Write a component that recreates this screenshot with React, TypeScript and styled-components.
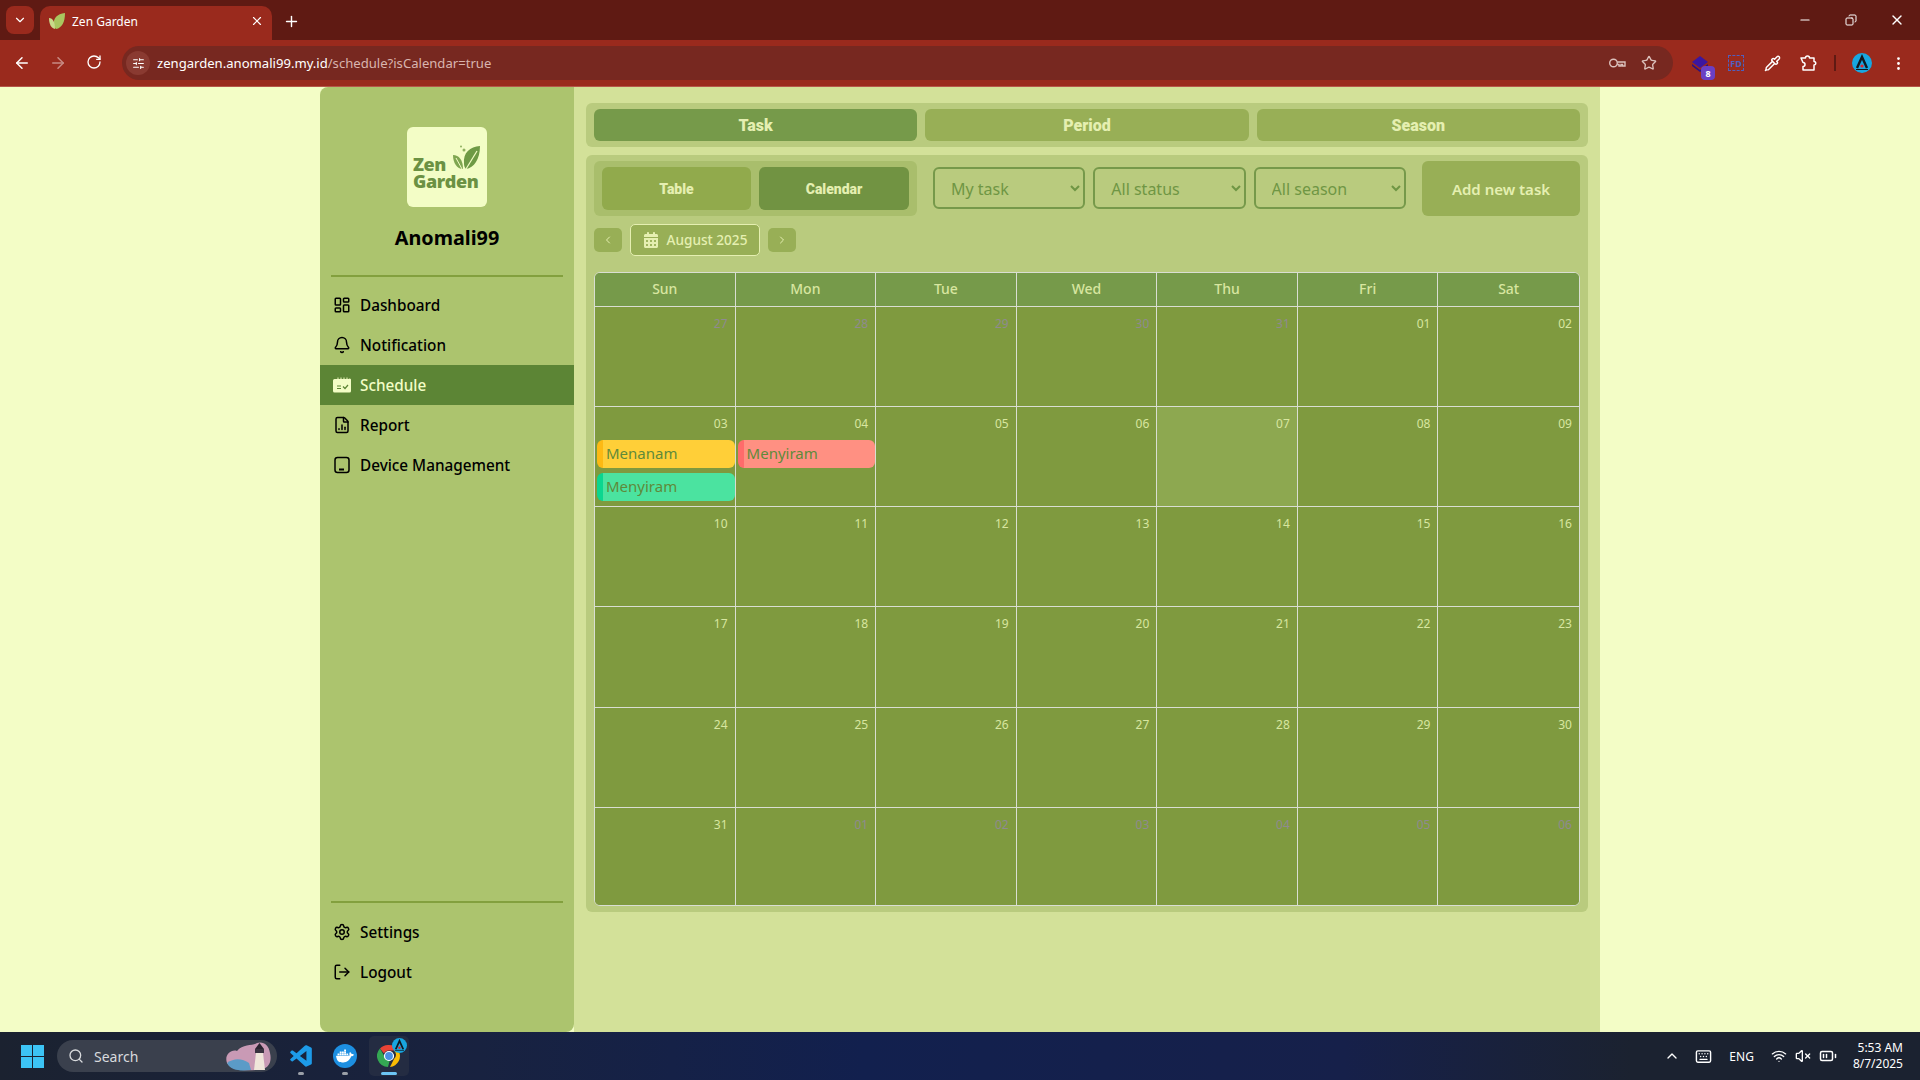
import styled, { createGlobalStyle } from "styled-components"
import { ArrowLeft, ArrowRight, ChevronDown, ChevronLeft, ChevronRight, ChevronUp, Copy, EllipsisVertical, Keyboard, LayoutDashboard, Bell, Minus, Pipette, Plus, RotateCw, Search, Settings, SlidersHorizontal, Star, VolumeX, Wifi, X, BatteryMedium, LogOut, FileChartColumn } from "lucide-react"
import { FaCalendarDays } from "react-icons/fa6"
import { SiDocker } from "react-icons/si"
import { BiLogoVisualStudio } from "react-icons/bi"

const GlobalStyle = createGlobalStyle`
    * { box-sizing: border-box; }
    html, body { margin: 0; padding: 0; height: 100%; overflow: hidden; }
    body { font-family: "Noto Sans", "Open Sans", sans-serif; background: #F3FDC6; }
`

const Screen = styled.div`
    width: 1920px;
    height: 1080px;
    display: flex;
    flex-direction: column;
`

/* browser chrome */
const TabStrip = styled.div`
    height: 40px;
    flex: none;
    background: #5F1A13;
    display: flex;
    align-items: flex-end;
    padding-left: 6px;
    color: #fff;
`
const TabMenu = styled.div`
    width: 28px;
    height: 28px;
    margin-bottom: 6px;
    border-radius: 8px;
    background: #9A2A1D;
    display: flex;
    align-items: center;
    justify-content: center;
`
const Tab = styled.div`
    width: 232px;
    height: 34px;
    margin-left: 6px;
    padding: 0 8px 4px 8px;
    border-radius: 10px 10px 0 0;
    background: #9A2A1D;
    display: flex;
    align-items: center;
    gap: 6px;
    font-size: 12px;
`
const TabTitle = styled.span`
    flex: 1;
`
const NewTab = styled.div`
    width: 38px;
    height: 34px;
    padding-bottom: 4px;
    display: flex;
    align-items: center;
    justify-content: center;
`
const WindowButtons = styled.div`
    margin-left: auto;
    height: 40px;
    display: flex;
    align-items: center;
`
const WindowButton = styled.div`
    width: 46px;
    display: flex;
    justify-content: center;
`
const Toolbar = styled.div`
    height: 47px;
    flex: none;
    background: #9A2A1D;
    border-bottom: 1px solid #B5564A;
    display: flex;
    align-items: center;
    color: #fff;
`
const NavIcon = styled.div<{ $off?: boolean }>`
    width: 36px;
    display: flex;
    justify-content: center;
    opacity: ${props => props.$off ? 0.45 : 1};
`
const NavIcons = styled.div`
    width: 112px;
    padding-left: 4px;
    display: flex;
    flex: none;
`
const Omnibox = styled.div`
    width: 1551px;
    height: 34px;
    margin-left: 10px;
    margin-right: 9px;
    border-radius: 17px;
    background: #772820;
    display: flex;
    align-items: center;
    padding: 0 16px 0 4px;
    font-size: 13.1px;
`
const SiteInfo = styled.div`
    width: 24px;
    height: 24px;
    border-radius: 50%;
    background: #8A3A31;
    display: flex;
    align-items: center;
    justify-content: center;
    margin-right: 7px;
`
const Url = styled.span`
    flex: 1;
    color: #fff;
    span { color: #D9B5AF; }
`
const OmniIcons = styled.div`
    display: flex;
    align-items: center;
    gap: 15px;
    color: #DCC1BC;
`
const Extensions = styled.div`
    display: flex;
    align-items: center;
    gap: 16px;
    padding-left: 8px;
`
const ExtSlot = styled.div`
    position: relative;
    width: 20px;
    height: 20px;
    display: flex;
    align-items: center;
    justify-content: center;
`
const ExtBadge = styled.span`
    position: absolute;
    right: -5px;
    bottom: -7px;
    width: 14px;
    height: 14px;
    border-radius: 4px;
    background: #6A3FC4;
    color: #fff;
    font-size: 9px;
    font-weight: 700;
    display: flex;
    align-items: center;
    justify-content: center;
`
const FdBox = styled.div`
    width: 16px;
    height: 16px;
    border: 1px dashed #4F5FC0;
    color: #4F5FC0;
    font-size: 9px;
    font-weight: 700;
    display: flex;
    align-items: center;
    justify-content: center;
`
const Separator = styled.div`
    width: 2px;
    height: 16px;
    background: #5F1A13;
`

/* page */
const Page = styled.div`
    flex: 1;
    min-height: 0;
    display: flex;
    justify-content: center;
    background: #F3FDC6;
`
const Sidebar = styled.aside`
    width: 254px;
    background: #ACC46E;
    border-radius: 8px 0 8px 8px;
    display: flex;
    flex-direction: column;
    padding-bottom: 40px;
`
const Logo = styled.div`
    width: 80px;
    height: 80px;
    margin: 40px auto 0;
    border-radius: 6px;
    background: #F3FDC6;
    color: #6B9143;
    font-family: "Open Sans", sans-serif;
    font-weight: 800;
    font-size: 18px;
    line-height: 17px;
    padding: 29px 0 0 6px;
`
const LogoLine = styled.div`
    display: flex;
    height: 16.5px;
    letter-spacing: -0.4px;
`
const UserName = styled.h1`
    margin: 15px 0 0;
    text-align: center;
    font-size: 19.8px;
    line-height: 32px;
    font-weight: 700;
    color: #000;
`
const Divider = styled.hr<{ $bottom?: boolean }>`
    width: 232px;
    height: 2px;
    border: none;
    background: #83A03E;
    margin: ${props => props.$bottom ? "auto auto 9px" : "21px auto 8px"};
`
const NavItem = styled.div<{ $active?: boolean }>`
    height: 40px;
    flex: none;
    display: flex;
    align-items: center;
    gap: 9px;
    padding-left: 13px;
    font-size: 15.3px;
    font-weight: 500;
    color: ${props => props.$active ? "#F3FDC6" : "#000"};
    background: ${props => props.$active ? "#5C8535" : "transparent"};
`
const Main = styled.main`
    width: 1026px;
    background: #D3E199;
    padding: 16px 12px 0;
    display: flex;
    flex-direction: column;
    gap: 8px;
`
const TabPanel = styled.div`
    height: 44px;
    flex: none;
    padding: 6px 8px;
    background: #B9CB7E;
    border-radius: 6px;
    display: grid;
    grid-template-columns: repeat(3, 1fr);
    gap: 8px;
`
const TopTab = styled.div<{ $active?: boolean }>`
    border-radius: 6px;
    background: ${props => props.$active ? "#769A4A" : "#98AF56"};
    color: #E5EFB1;
    font-family: Roboto, sans-serif;
    font-weight: 900;
    font-size: 16px;
    display: flex;
    align-items: center;
    justify-content: center;
`
const ContentPanel = styled.section`
    height: 757px;
    flex: none;
    padding: 6px 8px;
    background: #B9CB7E;
    border-radius: 6px;
    display: flex;
    flex-direction: column;
`
const FilterRow = styled.div`
    height: 55px;
    flex: none;
    display: flex;
    gap: 8px;
`
const ViewSwitch = styled.div`
    width: 323px;
    height: 55px;
    padding: 6px 8px;
    margin-right: 8px;
    border-radius: 6px;
    background: #A9BE6C;
    display: grid;
    grid-template-columns: 149px 150px;
    gap: 8px;
`
const ViewButton = styled.div<{ $active?: boolean }>`
    border-radius: 6px;
    background: ${props => props.$active ? "#719342" : "#91AA4C"};
    color: #E5EFB1;
    font-family: Roboto, sans-serif;
    font-weight: 900;
    font-size: 14px;
    display: flex;
    align-items: center;
    justify-content: center;
`
const Filter = styled.select`
    width: 152.3px;
    height: 42px;
    margin-top: 6px;
    border: 2px solid #76994A;
    border-radius: 6px;
    background: transparent;
    color: #6F9644;
    font-family: inherit;
    font-size: 16px;
    padding: 2px 12px 0;
`
const AddButton = styled.div`
    width: 158px;
    height: 55px;
    margin-left: auto;
    border-radius: 6px;
    background: #98AF56;
    color: #E5EFB1;
    font-size: 15px;
    font-weight: 600;
    display: flex;
    align-items: center;
    justify-content: center;
`
const MonthRow = styled.div`
    display: flex;
    align-items: center;
    gap: 8px;
    height: 32px;
    margin-top: 8px;
`
const MonthStep = styled.div`
    width: 28px;
    height: 24px;
    border-radius: 5px;
    background: #98AF56;
    color: #E5EFB1;
    display: flex;
    align-items: center;
    justify-content: center;
`
const MonthLabel = styled.div`
    width: 130px;
    height: 32px;
    padding-bottom: 1px;
    border: 1px solid #E5EFB1;
    border-radius: 5px;
    background: #98AF56;
    color: #E5EFB1;
    font-size: 13.6px;
    font-weight: 500;
    display: flex;
    align-items: center;
    justify-content: center;
    gap: 8px;
`
const Calendar = styled.div`
    width: 986px;
    height: 636px;
    margin-top: 16px;
    border: 1px solid #D9DED2;
    border-radius: 6px;
    overflow: hidden;
    display: grid;
    grid-template-columns: repeat(7, 1fr);
    grid-template-rows: 34px repeat(6, 100.15px);
    background: #7F9A3F;
`
const DayName = styled.div<{ $last?: boolean }>`
    padding-bottom: 2px;
    background: #769A4A;
    color: #D8E6A0;
    font-size: 14px;
    font-weight: 500;
    display: flex;
    align-items: center;
    justify-content: center;
    border-right: ${props => props.$last ? "none" : "1px solid #D9DED2"};
    border-bottom: 1px solid #D9DED2;
`
const DayCell = styled.div<{ $today?: boolean; $last?: boolean; $bottom?: boolean }>`
    min-height: 0;
    overflow: hidden;
    padding: 9px 0 0 2px;
    background: ${props => props.$today ? "#8DA850" : "#7F9A3F"};
    border-right: ${props => props.$last ? "none" : "1px solid #D9DED2"};
    border-bottom: ${props => props.$bottom ? "none" : "1px solid #D9DED2"};
`
const DayNumber = styled.div<{ $dim?: boolean }>`
    height: 16px;
    padding-right: 7px;
    text-align: right;
    font-size: 12px;
    line-height: 16px;
    color: ${props => props.$dim ? "#8F8A90" : "#D8E6A0"};
`
const EventList = styled.div`
    margin-top: 8px;
    display: flex;
    flex-direction: column;
    gap: 5px;
`
const EventChip = styled.div<{ $fill: string; $edge: string }>`
    height: 28px;
    flex: none;
    padding-left: 3px;
    border-left: 6px solid ${props => props.$edge};
    border-radius: 6px;
    background: ${props => props.$fill};
    color: #5F8A3A;
    font-size: 15px;
    line-height: 26px;
`

/* taskbar */
const Taskbar = styled.footer`
    height: 48px;
    flex: none;
    background: linear-gradient(90deg, #1B2230 0%, #182240 25%, #12204E 45%, #16204A 70%, #1B2230 85%);
    display: flex;
    align-items: center;
    color: #fff;
    padding-left: 21px;
`
const SearchBox = styled.div`
    width: 220px;
    height: 32px;
    margin-left: 13px;
    padding: 0 4px 0 11px;
    border-radius: 16px;
    background: #3A404D;
    color: #D8DADD;
    font-size: 14px;
    display: flex;
    align-items: center;
    gap: 10px;
`
const SearchLabel = styled.span`
    flex: 1;
`
const TaskItem = styled.div<{ $active?: boolean }>`
    position: relative;
    width: 40px;
    height: 40px;
    margin-left: 4px;
    border-radius: 5px;
    background: ${props => props.$active ? "#242C42" : "transparent"};
    display: flex;
    align-items: center;
    justify-content: center;
    &::after {
        content: "";
        position: absolute;
        bottom: 1px;
        left: 50%;
        width: ${props => props.$active ? "16px" : "6px"};
        height: 3px;
        margin-left: ${props => props.$active ? "-8px" : "-3px"};
        border-radius: 2px;
        background: ${props => props.$active ? "#6CC5F5" : "#9BA0A8"};
    }
`
const DockedDocker = styled(SiDocker)`
    width: 24px;
    height: 24px;
    padding: 3px;
    border-radius: 50%;
    background: #1D8FE1;
    color: #fff;
`
const Tray = styled.div`
    margin-left: auto;
    display: flex;
    align-items: center;
    gap: 8px;
    font-size: 12px;
    padding-right: 17px;
`
const TrayChevron = styled(ChevronUp)`
    margin-right: 7px;
`
const TrayText = styled.span`
    margin: 0 9px;
`
const Clock = styled.div`
    margin-left: 8px;
    text-align: right;
    line-height: 16px;
    font-size: 12px;
`
const ChromeMark = styled.div`
    position: relative;
    width: 24px;
    height: 24px;
`
const ChromeBadge = styled.div`
    position: absolute;
    top: 2px;
    right: 2px;
    display: flex;
`

const LeafMark = () => (
    <svg width="32" height="26" viewBox="0 0 30 26" style={{ marginLeft: 5, marginTop: -11 }}>
        <path d="M28 1C18 2 11 7 12 19c0 2 1 4 2 5C22 23 28 14 28 1Z" fill="#6E9A45" />
        <path d="M1 10c6 0 10 5 10 14C5 24 1 18 1 10Z" fill="#7FA650" />
        <path d="M14 24 25 6" stroke="#F3FDC6" strokeWidth="1.2" />
        <path d="M10 24 4 13" stroke="#F3FDC6" strokeWidth="1" />
        <circle cx="12" cy="5" r="1.5" fill="#8FB060" />
        <circle cx="9" cy="1.5" r="1" fill="#8FB060" />
    </svg>
)

const Favicon = () => (
    <svg width="18" height="18" viewBox="0 0 18 18">
        <path d="M17 1C9 2 5 6 6 13c0 2 1 3 2 4C14 16 17 10 17 1Z" fill="#A9C65F" />
        <path d="M1 6c4 0 6 4 6 11C3 16 1 12 1 6Z" fill="#C9DA8A" />
    </svg>
)

const StackIcon = () => (
    <svg width="20" height="20" viewBox="0 0 20 20">
        <path d="M10 3 2 9l8 6 8-6Z" fill="#3B16A0" />
        <path d="M2 11l8 6 8-6v2l-8 6-8-6Z" fill="#2C1080" />
    </svg>
)

const AvatarLogo = ({ size }: { size: number }) => (
    <svg width={size} height={size} viewBox="0 0 20 20">
        <circle cx="10" cy="10" r="10" fill="#18A6E0" />
        <path d="M5 15 10 4l5 11" fill="none" stroke="#101820" strokeWidth="2.4" />
        <circle cx="10" cy="13" r="1.6" fill="#E5202A" />
        <path d="M4 16.5h12" stroke="#101820" strokeWidth="1" />
    </svg>
)

const KeyIcon = () => (
    <svg width="18" height="18" viewBox="0 0 18 18" fill="none" stroke="currentColor" strokeWidth="1.4">
        <circle cx="5.5" cy="9" r="3.8" />
        <path d="M9.3 8H17v4h-2.500v-1.500H13V12h-2v-1.500H9.300" />
    </svg>
)

const PuzzleIcon = () => (
    <svg width="18" height="18" viewBox="0 0 18 18" fill="none" stroke="#fff" strokeWidth="1.500" strokeLinejoin="round">
        <path d="M2 4h4.500a2 2 0 0 1 4 0H15v3.500a1.500 1.500 0 0 1 0 3.500v5H4v-3.500a1.800 1.800 0 0 0 0-4L2 4Z" />
    </svg>
)

const ScheduleIcon = () => (
    <svg width="18" height="18" viewBox="0 0 18 18">
        <path d="M2.500 3h2V1.500h1V3h2V1.500h1V3h2V1.500h1V3h2V1.500h1V3h1A1.500 1.500 0 0 1 18 4.500V15a1.500 1.500 0 0 1-1.500 1.500h-15A1.500 1.500 0 0 1 0 15V4.500A1.500 1.500 0 0 1 1.500 3Z" fill="#F3FDC6" />
        <path d="M4 10h4M4 12.500h4" stroke="#5C8535" strokeWidth="1" />
        <path d="M10 10.500l2 2 3-3.500" fill="none" stroke="#5C8535" strokeWidth="1.200" />
    </svg>
)

const DeviceIcon = () => (
    <svg width="18" height="18" viewBox="0 0 18 18" fill="none" stroke="#000" strokeWidth="1.500">
        <rect x="2" y="1.500" width="14" height="15" rx="2.500" />
        <path d="M6 13.500h5" strokeWidth="2" />
    </svg>
)

const WindowsLogo = () => (
    <svg width="23" height="23" viewBox="0 0 23 23">
        <path d="M0 0h11v11H0zM12 0h11v11H12zM0 12h11v11H0zM12 12h11v11H12z" fill="#3CC4F5" />
    </svg>
)

const LighthouseArt = () => (
    <svg width="50" height="30" viewBox="0 0 50 30">
        <path d="M4 22C1 14 8 8 14 10 20 3 30 5 34 2c6-2 12 2 13 10 2 8-1 15-8 16-10 2-30 3-35-6Z" fill="#C99AB5" />
        <path d="M4 22c8-6 16-4 22 0l2 7c-10 1-20 1-24-7Z" fill="#5B9BC7" />
        <path d="M33 12h7l2 17h-11Z" fill="#F0E6DA" />
        <path d="M32 8h9v4h-9Z" fill="#3A3340" />
        <path d="M36.500 2 41 8h-9Z" fill="#2A2430" />
    </svg>
)

const ChromeLogo = () => (
    <svg width="24" height="24" viewBox="0 0 24 24">
        <path d="M12 1a11 11 0 0 1 9.500 5.500H12a5.500 5.500 0 0 0-5 3L3 4.500A11 11 0 0 1 12 1Z" fill="#EA4335" />
        <path d="M21.500 6.500A11 11 0 0 1 13 23l4-8a5.500 5.500 0 0 0 0-8.500Z" fill="#FBBC04" />
        <path d="M3 4.500l4.500 8a5.500 5.500 0 0 0 5.500 3L11 23A11 11 0 0 1 3 4.500Z" fill="#34A853" />
        <circle cx="12" cy="12" r="4.500" fill="#4A90E2" stroke="#fff" strokeWidth="1.200" />
    </svg>
)

const navItems = [
    { label: "Dashboard", icon: <LayoutDashboard size={18} /> },
    { label: "Notification", icon: <Bell size={18} /> },
    { label: "Schedule", icon: <ScheduleIcon />, active: true },
    { label: "Report", icon: <FileChartColumn size={18} /> },
    { label: "Device Management", icon: <DeviceIcon /> },
]

const dayNames = ["Sun", "Mon", "Tue", "Wed", "Thu", "Fri", "Sat"]

const calendarDays = [
    ...[27, 28, 29, 30, 31].map(d => ({ day: String(d), dim: true })),
    ...Array.from({ length: 31 }, (_, i) => ({ day: String(i + 1).padStart(2, "0"), dim: false })),
    ...[1, 2, 3, 4, 5, 6].map(d => ({ day: String(d).padStart(2, "0"), dim: true })),
]

const events: Record<number, { name: string; fill: string; edge: string }[]> = {
    7: [
        { name: "Menanam", fill: "#FFCF38", edge: "#FDB913" },
        { name: "Menyiram", fill: "#4BE3A0", edge: "#0BD68F" },
        { name: "", fill: "#C3C7B6", edge: "#B5B9A8" },
    ],
    8: [{ name: "Menyiram", fill: "#FF9082", edge: "#FF6B6B" }],
}

export default function App() {
    return (
        <Screen>
            <GlobalStyle />
            <TabStrip>
                <TabMenu><ChevronDown size={14} /></TabMenu>
                <Tab>
                    <Favicon />
                    <TabTitle>Zen Garden</TabTitle>
                    <X size={14} />
                </Tab>
                <NewTab><Plus size={17} /></NewTab>
                <WindowButtons>
                    <WindowButton><Minus size={14} /></WindowButton>
                    <WindowButton><Copy size={12} style={{ transform: "scaleX(-1)" }} /></WindowButton>
                    <WindowButton><X size={16} /></WindowButton>
                </WindowButtons>
            </TabStrip>
            <Toolbar>
                <NavIcons>
                    <NavIcon><ArrowLeft size={18} /></NavIcon>
                    <NavIcon $off><ArrowRight size={18} /></NavIcon>
                    <NavIcon><RotateCw size={16} /></NavIcon>
                </NavIcons>
                <Omnibox>
                    <SiteInfo><SlidersHorizontal size={13} /></SiteInfo>
                    <Url>zengarden.anomali99.my.id<span>/schedule?isCalendar=true</span></Url>
                    <OmniIcons>
                        <KeyIcon />
                        <Star size={16} />
                    </OmniIcons>
                </Omnibox>
                <Extensions>
                    <ExtSlot>
                        <StackIcon />
                        <ExtBadge>8</ExtBadge>
                    </ExtSlot>
                    <ExtSlot><FdBox>FD</FdBox></ExtSlot>
                    <ExtSlot><Pipette size={17} /></ExtSlot>
                    <ExtSlot><PuzzleIcon /></ExtSlot>
                    <Separator />
                    <ExtSlot><AvatarLogo size={20} /></ExtSlot>
                    <ExtSlot><EllipsisVertical size={17} /></ExtSlot>
                </Extensions>
            </Toolbar>

            <Page>
                <Sidebar>
                    <Logo>
                        <LogoLine>Zen<LeafMark /></LogoLine>
                        <LogoLine>Garden</LogoLine>
                    </Logo>
                    <UserName>Anomali99</UserName>
                    <Divider />
                    {navItems.map(item => (
                        <NavItem key={item.label} $active={item.active}>
                            {item.icon}
                            {item.label}
                        </NavItem>
                    ))}
                    <Divider $bottom />
                    <NavItem><Settings size={18} />Settings</NavItem>
                    <NavItem><LogOut size={18} />Logout</NavItem>
                </Sidebar>
                <Main>
                    <TabPanel>
                        <TopTab $active>Task</TopTab>
                        <TopTab>Period</TopTab>
                        <TopTab>Season</TopTab>
                    </TabPanel>
                    <ContentPanel>
                        <FilterRow>
                            <ViewSwitch>
                                <ViewButton>Table</ViewButton>
                                <ViewButton $active>Calendar</ViewButton>
                            </ViewSwitch>
                            <Filter defaultValue="My task"><option>My task</option></Filter>
                            <Filter defaultValue="All status"><option>All status</option></Filter>
                            <Filter defaultValue="All season"><option>All season</option></Filter>
                            <AddButton>Add new task</AddButton>
                        </FilterRow>
                        <MonthRow>
                            <MonthStep><ChevronLeft size={12} /></MonthStep>
                            <MonthLabel><FaCalendarDays size={16} />August 2025</MonthLabel>
                            <MonthStep><ChevronRight size={12} /></MonthStep>
                        </MonthRow>
                        <Calendar>
                            {dayNames.map((name, i) => (
                                <DayName key={name} $last={i === 6}>{name}</DayName>
                            ))}
                            {calendarDays.map((cell, i) => (
                                <DayCell key={i} $today={i === 11} $last={i % 7 === 6} $bottom={i >= 35}>
                                    <DayNumber $dim={cell.dim}>{cell.day}</DayNumber>
                                    {events[i] ? (
                                        <EventList>
                                            {events[i].map((ev, j) => (
                                                <EventChip key={j} $fill={ev.fill} $edge={ev.edge}>{ev.name}</EventChip>
                                            ))}
                                        </EventList>
                                    ) : null}
                                </DayCell>
                            ))}
                        </Calendar>
                    </ContentPanel>
                </Main>
            </Page>

            <Taskbar>
                <WindowsLogo />
                <SearchBox>
                    <Search size={16} />
                    <SearchLabel>Search</SearchLabel>
                    <LighthouseArt />
                </SearchBox>
                <TaskItem><BiLogoVisualStudio size={26} color="#1D9BE8" /></TaskItem>
                <TaskItem><DockedDocker /></TaskItem>
                <TaskItem $active>
                    <ChromeMark><ChromeLogo /></ChromeMark>
                    <ChromeBadge><AvatarLogo size={15} /></ChromeBadge>
                </TaskItem>
                <Tray>
                    <TrayChevron size={16} />
                    <Keyboard size={17} />
                    <TrayText>ENG</TrayText>
                    <Wifi size={16} />
                    <VolumeX size={16} />
                    <BatteryMedium size={18} />
                    <Clock>
                        5:53 AM
                        <br />
                        8/7/2025
                    </Clock>
                </Tray>
            </Taskbar>
        </Screen>
    )
}
